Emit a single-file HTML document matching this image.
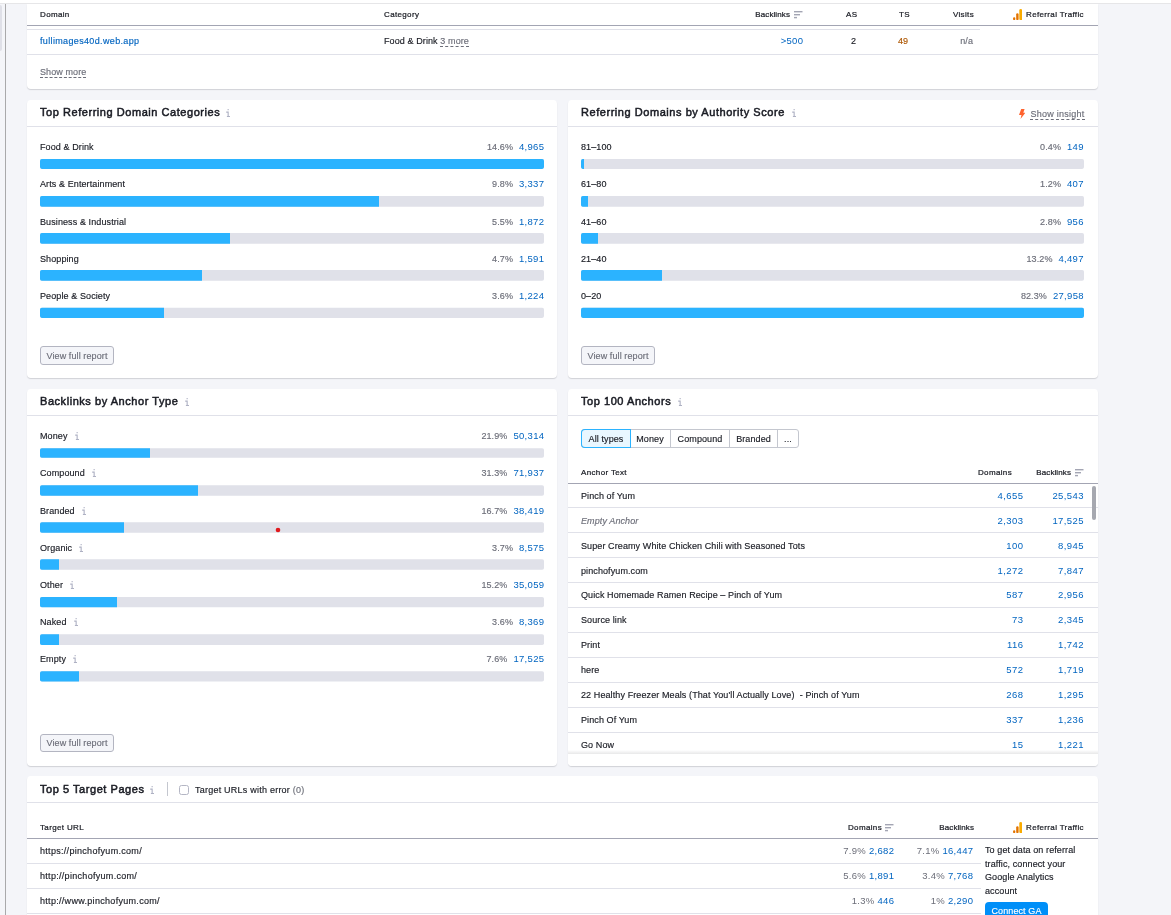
<!DOCTYPE html>
<html lang="en">
<head>
<meta charset="utf-8">
<title>Backlink Analytics</title>
<style>
*{box-sizing:border-box;margin:0;padding:0}
html,body{width:1171px;height:915px;overflow:hidden}
body{position:relative;background:#f4f5f9;font-family:"Liberation Sans",Arial,sans-serif;font-size:9px;line-height:12px;color:#191b23;letter-spacing:.1px;-webkit-text-stroke:.15px}
#pg{position:absolute;left:0;top:0;width:1171px;height:915px;will-change:transform}
.a{position:absolute;white-space:nowrap}
.card{position:absolute;background:#fff;border-radius:4px;box-shadow:0 1px 1px rgba(25,27,35,.16)}
.ttl{position:absolute;left:13px;top:4px;font-size:11px;line-height:16px;font-weight:normal;-webkit-text-stroke:.5px #191b23;white-space:nowrap;letter-spacing:.55px}
.hr{position:absolute;left:0;right:0;height:1px;background:#e0e1e9}
.hd{position:absolute;height:1px;background:#a3a5b3}
.i{display:inline-block;fill:#aeb1c3;margin-left:7px;vertical-align:-1px}
.lb{position:absolute;left:13px;white-space:nowrap;line-height:12px}
.lb .i{margin-left:7px;vertical-align:-1px}
.vl{position:absolute;right:13px;white-space:nowrap;line-height:12px;color:#6c6e79;text-align:right;letter-spacing:.1px}
.vl b{font-weight:normal;color:#0064c0;margin-left:6px;font-size:9.5px;letter-spacing:.3px;margin-right:-.3px;-webkit-text-stroke:0}
.bar{position:absolute;left:13px;display:block}
.bar .tr{fill:#e0e1e9}
.bar .fl{fill:#2bb3ff}
#c2 .vl{right:14.5px}
.btn{position:absolute;left:13px;width:74px;height:19px;border:1px solid #b3b5c1;border-radius:3px;background:#f4f5f9;color:#6c6e79;font-size:9px;line-height:18px;text-align:center;white-space:nowrap}
.th{position:absolute;white-space:nowrap;font-size:8px;line-height:10px;font-weight:normal;-webkit-text-stroke:.22px #191b23;color:#191b23;letter-spacing:.35px}
.th.bl{letter-spacing:.1px}
.lnk{color:#0064c0}
.gr{color:#6c6e79}
.dash{border-bottom:1px dashed #6c6e79}
.sort{position:absolute;fill:#a3a5b3}
.num{position:absolute;white-space:nowrap;text-align:right;color:#0064c0;font-size:9.5px;letter-spacing:.3px;margin-right:-.3px;-webkit-text-stroke:0}
.pc{color:#6c6e79;letter-spacing:.3px;font-size:9.5px}

.pills{position:absolute;left:13px;top:40px;height:19px;display:flex;border:1px solid #c4c7cf;border-radius:3px;background:#fff}
.pills span{display:block;height:17px;line-height:17px;padding-top:1px;text-align:center;border-right:1px solid #c4c7cf;white-space:nowrap}
.pills span:last-child{border-right:0}
.pills span.on{background:#e9f7ff;box-shadow:0 0 0 1px #2bb3ff;border-right:0;border-radius:3px 0 0 3px;position:relative;z-index:1}
.rows{position:absolute;left:0;top:94.4px;width:530px}
.r{position:relative;height:24.93px;border-bottom:1px solid #e0e1e9;line-height:24px}
.r .tx{position:absolute;left:13px;top:.4px;white-space:nowrap}
.r .n1{position:absolute;right:75px;top:.4px;color:#0064c0;font-size:9.5px;letter-spacing:.4px;margin-right:-.4px;-webkit-text-stroke:0}
.r .n2{position:absolute;right:14.5px;top:.4px;color:#0064c0;font-size:9.5px;letter-spacing:.4px;margin-right:-.4px;-webkit-text-stroke:0}
</style>
</head>
<body>
<div id="pg">

<!-- page chrome -->
<div class="a" style="left:0;top:0;width:1171px;height:3px;background:#fff"></div>
<div class="a" style="left:0;top:3px;width:1171px;height:1px;background:#e6e6e8"></div>
<div class="a" style="left:0;top:5px;width:2px;height:46px;background:#dfe0e8;border-radius:0 2px 2px 0"></div>
<div class="a" style="left:5px;top:4px;width:1px;height:911px;background:#a9a9ab"></div>

<!-- CARD 0 : referring domains table tail -->
<div class="card" id="c0" style="left:27px;top:4px;width:1071px;height:85px;border-radius:0 0 4px 4px">
  <div class="th" style="left:13px;top:6px">Domain</div>
  <div class="th" style="left:357px;top:6px">Category</div>
  <div class="th bl" style="right:308px;top:6px">Backlinks</div>
  <svg class="sort" style="left:767px;top:6.6px" width="9" height="8" viewBox="0 0 9 8"><rect y="0" width="8.5" height="1.4"/><rect y="3" width="6" height="1.4"/><rect y="5.9" width="3" height="1.4"/></svg>
  <div class="th" style="left:819px;top:6px">AS</div>
  <div class="th" style="left:872px;top:6px">TS</div>
  <div class="th" style="right:124px;top:6px">Visits</div>
  <svg class="a" style="left:985.7px;top:4.8px" width="9.4" height="11.2" viewBox="0 0 9.4 11.2"><ellipse cx="1.2" cy="9.75" rx="1.2" ry="1.45" fill="#e37400"/><rect x="3.2" y="4.2" width="2.4" height="7" rx="1.2" fill="#e37400"/><rect x="6.3" y="0" width="3" height="11.2" rx="1.5" fill="#f9ab00"/></svg>
  <div class="th" style="left:999px;top:6px">Referral Traffic</div>
  <div class="hd" style="left:0;right:0;top:21px"></div>
  <div class="hr" style="top:25px;right:118px"></div>
  <div class="a lnk" style="left:13px;top:31px;letter-spacing:.35px">fullimages40d.web.app</div>
  <div class="a" style="left:357px;top:31px">Food &amp; Drink <span class="gr dash">3 more</span></div>
  <div class="num" style="right:295px;top:31px">&gt;500</div>
  <div class="a" style="left:824px;top:31px">2</div>
  <div class="a" style="left:871px;top:31px;color:#ad5600">49</div>
  <div class="a gr" style="right:125px;top:31px">n/a</div>
  <div class="hr" style="top:50px"></div>
  <div class="a gr" style="left:13px;top:62px"><span class="dash">Show more</span></div>
</div>

<!-- CARD 1 : Top Referring Domain Categories -->
<div class="card" id="c1" style="left:27px;top:100px;width:530px;height:278px">
  <div class="ttl">Top Referring Domain Categories<svg class="i" style="margin-left:5.5px" width="4" height="8" viewBox="0 0 4 8"><path d="M1.6 0h1.1v1.2H1.6zM.2 2.6h2.5v4.3H4V8H.9V6.9h.7V3.7H.2z"/></svg></div>
  <div class="hr" style="top:26px"></div>

  <div class="lb" style="top:41px">Food &amp; Drink</div>
  <div class="vl" style="top:41px">14.6%<b>4,965</b></div>
  <svg class="bar" style="top:59px" width="504" height="12" viewBox="0 0 504 12"><rect class="tr" y="0.1" width="504" height="9.8" rx="1.8"/><rect class="fl" y="0.1" width="504" height="9.8" rx="1.8"/></svg>

  <div class="lb" style="top:78px">Arts &amp; Entertainment</div>
  <div class="vl" style="top:78px">9.8%<b>3,337</b></div>
  <svg class="bar" style="top:96px" width="504" height="12" viewBox="0 0 504 12"><rect class="tr" y="0.1" width="504" height="10.7" rx="1.8"/><path class="fl" d="M1.8 0.1H339.0V10.8H1.8A1.8 1.8 0 0 1 0 9.0V1.9A1.8 1.8 0 0 1 1.8 0.1z"/></svg>

  <div class="lb" style="top:116px">Business &amp; Industrial</div>
  <div class="vl" style="top:116px">5.5%<b>1,872</b></div>
  <svg class="bar" style="top:133px" width="504" height="12" viewBox="0 0 504 12"><rect class="tr" y="0.1" width="504" height="10.7" rx="1.8"/><path class="fl" d="M1.8 0.1H190.0V10.8H1.8A1.8 1.8 0 0 1 0 9.0V1.9A1.8 1.8 0 0 1 1.8 0.1z"/></svg>

  <div class="lb" style="top:153px">Shopping</div>
  <div class="vl" style="top:153px">4.7%<b>1,591</b></div>
  <svg class="bar" style="top:170px" width="504" height="12" viewBox="0 0 504 12"><rect class="tr" y="0.0" width="504" height="10.8" rx="1.8"/><path class="fl" d="M1.8 0.0H162.0V10.8H1.8A1.8 1.8 0 0 1 0 9.0V1.8A1.8 1.8 0 0 1 1.8 0.0z"/></svg>

  <div class="lb" style="top:190px">People &amp; Society</div>
  <div class="vl" style="top:190px">3.6%<b>1,224</b></div>
  <svg class="bar" style="top:207px" width="504" height="12" viewBox="0 0 504 12"><rect class="tr" y="0.8" width="504" height="10.1" rx="1.8"/><path class="fl" d="M1.8 0.8H124.0V10.9H1.8A1.8 1.8 0 0 1 0 9.1V2.6A1.8 1.8 0 0 1 1.8 0.8z"/></svg>

  <div class="btn" style="top:246px">View full report</div>
</div>

<!-- CARD 2 : Referring Domains by Authority Score -->
<div class="card" id="c2" style="left:568px;top:100px;width:530px;height:278px">
  <div class="ttl">Referring Domains by Authority Score<svg class="i" width="4" height="8" viewBox="0 0 4 8"><path d="M1.6 0h1.1v1.2H1.6zM.2 2.6h2.5v4.3H4V8H.9V6.9h.7V3.7H.2z"/></svg></div>
  <svg class="a" style="left:450.8px;top:8.8px" width="6.4" height="10" viewBox="0 0 6.4 10"><path d="M2.2 0H5.6L4.3 3.7H6.4L1.5 10L2.5 5.9H0z" fill="#ff622d"/></svg>
  <div class="a gr" style="right:13.5px;top:8px;letter-spacing:.25px"><span class="dash">Show insight</span></div>
  <div class="hr" style="top:26px"></div>

  <div class="lb" style="top:41px">81–100</div>
  <div class="vl" style="top:41px">0.4%<b>149</b></div>
  <svg class="bar" style="top:59px" width="503" height="12" viewBox="0 0 503 12"><rect class="tr" y="0.1" width="503" height="9.8" rx="1.8"/><path class="fl" d="M1.8 0.1H3.0V9.9H1.8A1.8 1.8 0 0 1 0 8.1V1.9A1.8 1.8 0 0 1 1.8 0.1z"/></svg>

  <div class="lb" style="top:78px">61–80</div>
  <div class="vl" style="top:78px">1.2%<b>407</b></div>
  <svg class="bar" style="top:96px" width="503" height="12" viewBox="0 0 503 12"><rect class="tr" y="0.1" width="503" height="10.7" rx="1.8"/><path class="fl" d="M1.8 0.1H7.0V10.8H1.8A1.8 1.8 0 0 1 0 9.0V1.9A1.8 1.8 0 0 1 1.8 0.1z"/></svg>

  <div class="lb" style="top:116px">41–60</div>
  <div class="vl" style="top:116px">2.8%<b>956</b></div>
  <svg class="bar" style="top:133px" width="503" height="12" viewBox="0 0 503 12"><rect class="tr" y="0.1" width="503" height="10.7" rx="1.8"/><path class="fl" d="M1.8 0.1H17.0V10.8H1.8A1.8 1.8 0 0 1 0 9.0V1.9A1.8 1.8 0 0 1 1.8 0.1z"/></svg>

  <div class="lb" style="top:153px">21–40</div>
  <div class="vl" style="top:153px">13.2%<b>4,497</b></div>
  <svg class="bar" style="top:170px" width="503" height="12" viewBox="0 0 503 12"><rect class="tr" y="0.0" width="503" height="10.8" rx="1.8"/><path class="fl" d="M1.8 0.0H81.0V10.8H1.8A1.8 1.8 0 0 1 0 9.0V1.8A1.8 1.8 0 0 1 1.8 0.0z"/></svg>

  <div class="lb" style="top:190px">0–20</div>
  <div class="vl" style="top:190px">82.3%<b>27,958</b></div>
  <svg class="bar" style="top:207px" width="503" height="12" viewBox="0 0 503 12"><rect class="tr" y="0.8" width="503" height="10.1" rx="1.8"/><rect class="fl" y="0.8" width="503" height="10.1" rx="1.8"/></svg>

  <div class="btn" style="top:246px">View full report</div>
</div>

<!-- CARD 3 : Backlinks by Anchor Type -->
<div class="card" id="c3" style="left:27px;top:389px;width:530px;height:377px">
  <div class="ttl">Backlinks by Anchor Type<svg class="i" width="4" height="8" viewBox="0 0 4 8"><path d="M1.6 0h1.1v1.2H1.6zM.2 2.6h2.5v4.3H4V8H.9V6.9h.7V3.7H.2z"/></svg></div>
  <div class="hr" style="top:26px"></div>

  <div class="lb" style="top:41px">Money<svg class="i" width="4" height="8" viewBox="0 0 4 8"><path d="M1.6 0h1.1v1.2H1.6zM.2 2.6h2.5v4.3H4V8H.9V6.9h.7V3.7H.2z"/></svg></div>
  <div class="vl" style="top:41px">21.9%<b>50,314</b></div>
  <svg class="bar" style="top:59px" width="504" height="12" viewBox="0 0 504 12"><rect class="tr" y="0.2" width="504" height="9.6" rx="1.8"/><path class="fl" d="M1.8 0.2H110.0V9.8H1.8A1.8 1.8 0 0 1 0 8.0V2.0A1.8 1.8 0 0 1 1.8 0.2z"/></svg>

  <div class="lb" style="top:78px">Compound<svg class="i" width="4" height="8" viewBox="0 0 4 8"><path d="M1.6 0h1.1v1.2H1.6zM.2 2.6h2.5v4.3H4V8H.9V6.9h.7V3.7H.2z"/></svg></div>
  <div class="vl" style="top:78px">31.3%<b>71,937</b></div>
  <svg class="bar" style="top:96px" width="504" height="12" viewBox="0 0 504 12"><rect class="tr" y="0.3" width="504" height="10.5" rx="1.8"/><path class="fl" d="M1.8 0.3H158.0V10.8H1.8A1.8 1.8 0 0 1 0 9.0V2.1A1.8 1.8 0 0 1 1.8 0.3z"/></svg>

  <div class="lb" style="top:116px">Branded<svg class="i" width="4" height="8" viewBox="0 0 4 8"><path d="M1.6 0h1.1v1.2H1.6zM.2 2.6h2.5v4.3H4V8H.9V6.9h.7V3.7H.2z"/></svg></div>
  <div class="vl" style="top:116px">16.7%<b>38,419</b></div>
  <svg class="bar" style="top:133px" width="504" height="12" viewBox="0 0 504 12"><rect class="tr" y="0.3" width="504" height="10.5" rx="1.8"/><path class="fl" d="M1.8 0.3H84.0V10.8H1.8A1.8 1.8 0 0 1 0 9.0V2.1A1.8 1.8 0 0 1 1.8 0.3z"/></svg>
  <svg class="a" style="left:248px;top:138px" width="6" height="6" viewBox="0 0 6 6"><circle cx="3" cy="3" r="2.3" fill="#e0191d"/></svg>

  <div class="lb" style="top:153px">Organic<svg class="i" width="4" height="8" viewBox="0 0 4 8"><path d="M1.6 0h1.1v1.2H1.6zM.2 2.6h2.5v4.3H4V8H.9V6.9h.7V3.7H.2z"/></svg></div>
  <div class="vl" style="top:153px">3.7%<b>8,575</b></div>
  <svg class="bar" style="top:170px" width="504" height="12" viewBox="0 0 504 12"><rect class="tr" y="0.2" width="504" height="10.5" rx="1.8"/><path class="fl" d="M1.8 0.2H19.0V10.7H1.8A1.8 1.8 0 0 1 0 8.9V2.0A1.8 1.8 0 0 1 1.8 0.2z"/></svg>

  <div class="lb" style="top:190px">Other<svg class="i" width="4" height="8" viewBox="0 0 4 8"><path d="M1.6 0h1.1v1.2H1.6zM.2 2.6h2.5v4.3H4V8H.9V6.9h.7V3.7H.2z"/></svg></div>
  <div class="vl" style="top:190px">15.2%<b>35,059</b></div>
  <svg class="bar" style="top:207px" width="504" height="12" viewBox="0 0 504 12"><rect class="tr" y="0.9" width="504" height="10.3" rx="1.8"/><path class="fl" d="M1.8 0.9H77.0V11.2H1.8A1.8 1.8 0 0 1 0 9.4V2.7A1.8 1.8 0 0 1 1.8 0.9z"/></svg>

  <div class="lb" style="top:227px">Naked<svg class="i" width="4" height="8" viewBox="0 0 4 8"><path d="M1.6 0h1.1v1.2H1.6zM.2 2.6h2.5v4.3H4V8H.9V6.9h.7V3.7H.2z"/></svg></div>
  <div class="vl" style="top:227px">3.6%<b>8,369</b></div>
  <svg class="bar" style="top:245px" width="504" height="12" viewBox="0 0 504 12"><rect class="tr" y="0.3" width="504" height="10.7" rx="1.8"/><path class="fl" d="M1.8 0.3H19.0V11.0H1.8A1.8 1.8 0 0 1 0 9.2V2.1A1.8 1.8 0 0 1 1.8 0.3z"/></svg>

  <div class="lb" style="top:264px">Empty<svg class="i" width="4" height="8" viewBox="0 0 4 8"><path d="M1.6 0h1.1v1.2H1.6zM.2 2.6h2.5v4.3H4V8H.9V6.9h.7V3.7H.2z"/></svg></div>
  <div class="vl" style="top:264px">7.6%<b>17,525</b></div>
  <svg class="bar" style="top:282px" width="504" height="12" viewBox="0 0 504 12"><rect class="tr" y="0.3" width="504" height="10.2" rx="1.8"/><path class="fl" d="M1.8 0.3H39.0V10.5H1.8A1.8 1.8 0 0 1 0 8.7V2.1A1.8 1.8 0 0 1 1.8 0.3z"/></svg>

  <div class="btn" style="top:345px;height:18px;line-height:16px">View full report</div>
</div>

<!-- CARD 4 : Top 100 Anchors -->
<div class="card" id="c4" style="left:568px;top:389px;width:530px;height:377px;overflow:hidden">
  <div class="ttl">Top 100 Anchors<svg class="i" width="4" height="8" viewBox="0 0 4 8"><path d="M1.6 0h1.1v1.2H1.6zM.2 2.6h2.5v4.3H4V8H.9V6.9h.7V3.7H.2z"/></svg></div>
  <div class="hr" style="top:26px"></div>

  <div class="pills">
    <span class="on" style="width:48px">All types</span><span style="width:41px">Money</span><span style="width:59px">Compound</span><span style="width:48px">Branded</span><span style="width:20px">...</span>
  </div>

  <div class="th" style="left:13px;top:79px">Anchor Text</div>
  <div class="th" style="right:86px;top:79px">Domains</div>
  <div class="th bl" style="right:27px;top:79px">Backlinks</div>
  <svg class="sort" style="left:507px;top:79.6px" width="9" height="8" viewBox="0 0 9 8"><rect y="0" width="8.5" height="1.4"/><rect y="3" width="6" height="1.4"/><rect y="5.9" width="3" height="1.4"/></svg>
  <div class="hd" style="left:0;right:0;top:94px"></div>

  <div class="rows">
    <div class="r"><span class="tx">Pinch of Yum</span><span class="n1">4,655</span><span class="n2">25,543</span></div>
    <div class="r"><span class="tx gr"><em>Empty Anchor</em></span><span class="n1">2,303</span><span class="n2">17,525</span></div>
    <div class="r"><span class="tx">Super Creamy White Chicken Chili with Seasoned Tots</span><span class="n1">100</span><span class="n2">8,945</span></div>
    <div class="r"><span class="tx">pinchofyum.com</span><span class="n1">1,272</span><span class="n2">7,847</span></div>
    <div class="r"><span class="tx">Quick Homemade Ramen Recipe – Pinch of Yum</span><span class="n1">587</span><span class="n2">2,956</span></div>
    <div class="r"><span class="tx">Source link</span><span class="n1">73</span><span class="n2">2,345</span></div>
    <div class="r"><span class="tx">Print</span><span class="n1">116</span><span class="n2">1,742</span></div>
    <div class="r"><span class="tx">here</span><span class="n1">572</span><span class="n2">1,719</span></div>
    <div class="r"><span class="tx">22 Healthy Freezer Meals (That You'll Actually Love)&nbsp; - Pinch of Yum</span><span class="n1">268</span><span class="n2">1,295</span></div>
    <div class="r"><span class="tx">Pinch Of Yum</span><span class="n1">337</span><span class="n2">1,236</span></div>
    <div class="r"><span class="tx">Go Now</span><span class="n1">15</span><span class="n2">1,221</span></div>
  </div>
  <div class="a" style="left:0;top:361px;width:530px;height:4px;background:linear-gradient(to bottom,rgba(25,27,35,0),rgba(25,27,35,.1))"></div>
  <div class="a" style="left:0;top:365px;width:530px;height:12px;background:#fff"></div>
  <div class="a" style="left:524px;top:97px;width:4px;height:34px;border-radius:2px;background:#a6a8b0"></div>
</div>

<!-- CARD 5 : Top 5 Target Pages -->
<div class="card" id="c5" style="left:27px;top:776px;width:1071px;height:150px">
  <div class="ttl" style="top:5px">Top 5 Target Pages<svg class="i" style="margin-left:5px" width="4" height="8" viewBox="0 0 4 8"><path d="M1.6 0h1.1v1.2H1.6zM.2 2.6h2.5v4.3H4V8H.9V6.9h.7V3.7H.2z"/></svg></div>
  <div class="a" style="left:140px;top:6px;width:1px;height:14px;background:#c4c7cf"></div>
  <div class="a" style="left:152px;top:9px;width:10px;height:10px;border:1px solid #b4b6c4;border-radius:2.5px;background:#fff"></div>
  <div class="a" style="left:168px;top:8px;letter-spacing:.23px">Target URLs with error <span class="gr">(0)</span></div>
  <div class="hr" style="top:26px"></div>

  <div class="th" style="left:13px;top:47px">Target URL</div>
  <div class="th" style="right:216px;top:47px">Domains</div>
  <svg class="sort" style="left:858px;top:47.6px" width="9" height="8" viewBox="0 0 9 8"><rect y="0" width="8.5" height="1.4"/><rect y="3" width="6" height="1.4"/><rect y="5.9" width="3" height="1.4"/></svg>
  <div class="th bl" style="right:124px;top:47px">Backlinks</div>
  <svg class="a" style="left:985.7px;top:45.9px" width="9.4" height="11.2" viewBox="0 0 9.4 11.2"><ellipse cx="1.2" cy="9.75" rx="1.2" ry="1.45" fill="#e37400"/><rect x="3.2" y="4.2" width="2.4" height="7" rx="1.2" fill="#e37400"/><rect x="6.3" y="0" width="3" height="11.2" rx="1.5" fill="#f9ab00"/></svg>
  <div class="th" style="left:999px;top:47px">Referral Traffic</div>
  <div class="hd" style="left:0;right:0;top:62px"></div>

  <div class="a" style="left:13px;top:69px;letter-spacing:.3px">https://pinchofyum.com/</div>
  <div class="num" style="right:204px;top:69px"><span class="pc">7.9%</span> 2,682</div>
  <div class="num" style="right:125px;top:69px"><span class="pc">7.1%</span> 16,447</div>
  <div class="hr" style="top:87px;right:117px"></div>

  <div class="a" style="left:13px;top:94px;letter-spacing:.3px">http://pinchofyum.com/</div>
  <div class="num" style="right:204px;top:94px"><span class="pc">5.6%</span> 1,891</div>
  <div class="num" style="right:125px;top:94px"><span class="pc">3.4%</span> 7,768</div>
  <div class="hr" style="top:112px;right:117px"></div>

  <div class="a" style="left:13px;top:119px;letter-spacing:.3px">http://www.pinchofyum.com/</div>
  <div class="num" style="right:204px;top:119px"><span class="pc">1.3%</span> 446</div>
  <div class="num" style="right:125px;top:119px"><span class="pc">1%</span> 2,290</div>
  <div class="hr" style="top:137px;right:117px"></div>

  <div class="a" style="left:958px;top:68px;width:100px;white-space:normal;line-height:13.5px">To get data on referral traffic, connect your Google Analytics account</div>
  <div class="a" style="left:958px;top:126px;width:63px;height:20px;border-radius:4px;background:#008ff8;color:#fff;text-align:center;line-height:19px">Connect GA</div>
</div>

</div>
</body>
</html>
